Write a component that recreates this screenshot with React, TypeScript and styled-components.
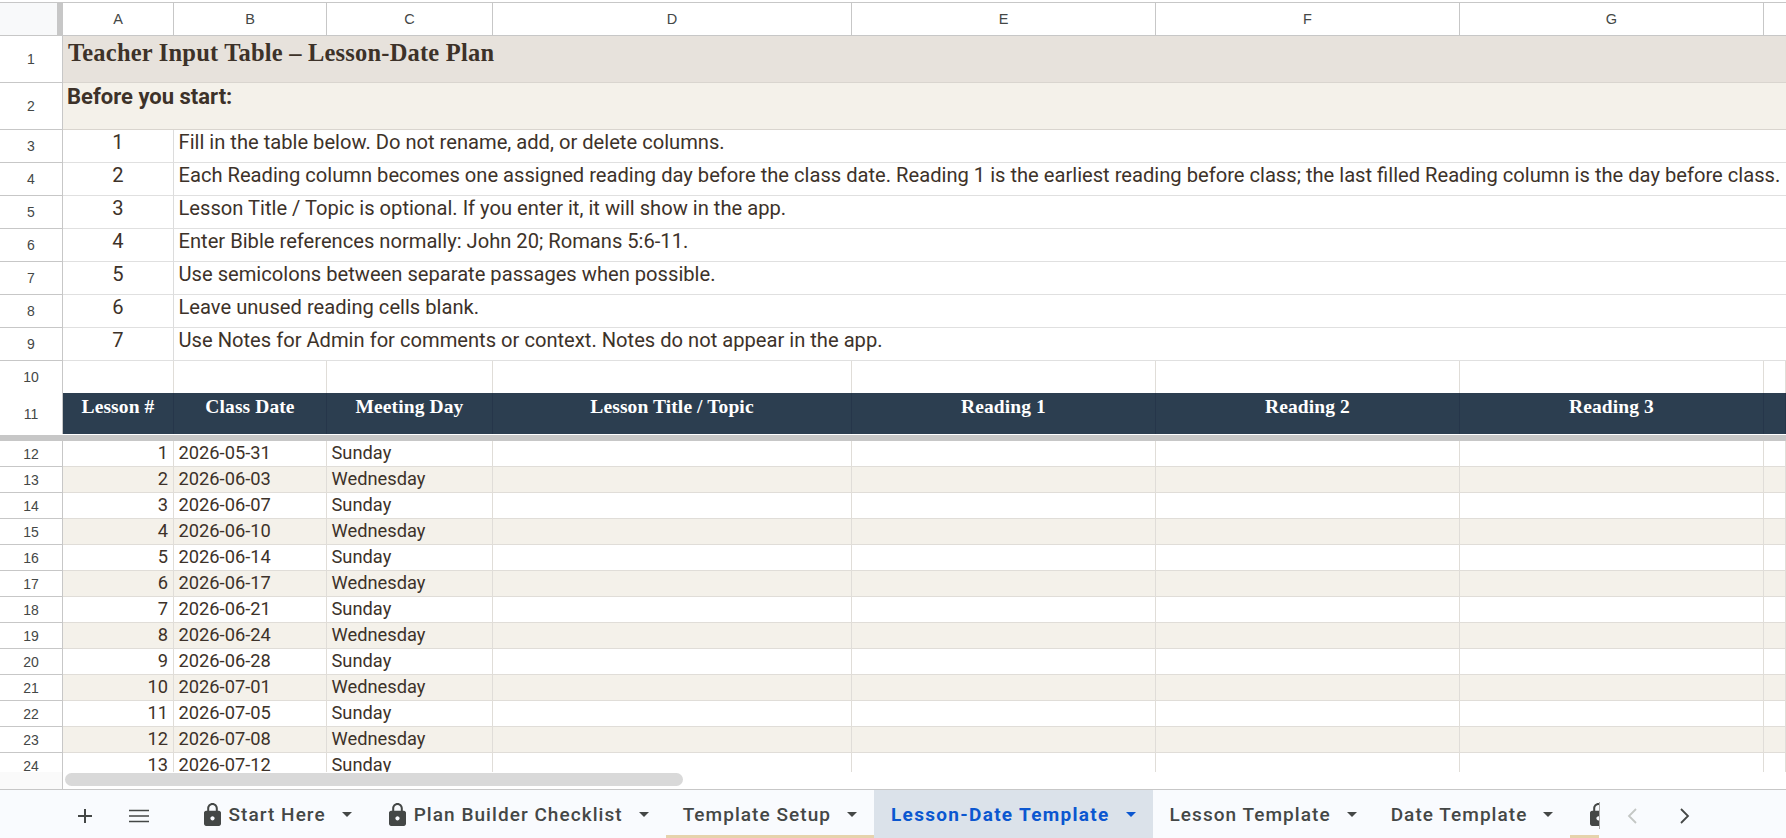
import * as React from "react";
import styled, { createGlobalStyle, css } from "styled-components";

const COLUMNS = "63px 111px 153px 166px 359px 304px 304px 304px 1fr";

const instructions = [
  "Fill in the table below. Do not rename, add, or delete columns.",
  "Each Reading column becomes one assigned reading day before the class date. Reading 1 is the earliest reading before class; the last filled Reading column is the day before class.",
  "Lesson Title / Topic is optional. If you enter it, it will show in the app.",
  "Enter Bible references normally: John 20; Romans 5:6-11.",
  "Use semicolons between separate passages when possible.",
  "Leave unused reading cells blank.",
  "Use Notes for Admin for comments or context. Notes do not appear in the app.",
];

const headers = ["Lesson #", "Class Date", "Meeting Day", "Lesson Title / Topic", "Reading 1", "Reading 2", "Reading 3"];

const dates = [
  "2026-05-31",
  "2026-06-03",
  "2026-06-07",
  "2026-06-10",
  "2026-06-14",
  "2026-06-17",
  "2026-06-21",
  "2026-06-24",
  "2026-06-28",
  "2026-07-01",
  "2026-07-05",
  "2026-07-08",
  "2026-07-12",
];

// the last tab is scrolled out of the strip, only its lock shows
const tabs = [
  { name: "Start Here", locked: true },
  { name: "Plan Builder Checklist", locked: true },
  { name: "Template Setup", underlined: true },
  { name: "Lesson-Date Template", active: true },
  { name: "Lesson Template" },
  { name: "Date Template" },
  { name: "", locked: true, underlined: true },
];

function LockIcon() {
  return (
    <LockSvg viewBox="4 1 16 21" preserveAspectRatio="none">
      <path d="M18 8h-1V6c0-2.76-2.24-5-5-5S7 3.24 7 6v2H6c-1.1 0-2 .9-2 2v10c0 1.1.9 2 2 2h12c1.1 0 2-.9 2-2V10c0-1.1-.9-2-2-2zm-6 9c-1.1 0-2-.9-2-2s.9-2 2-2 2 .9 2 2-.9 2-2 2zm3.1-9H8.9V6c0-1.71 1.39-3.1 3.1-3.1 1.71 0 3.1 1.39 3.1 3.1v2z" />
    </LockSvg>
  );
}

export default function App() {
  return (
    <Page>
      <GlobalStyle />
      <Sheet>
        <ColumnHeaderRow>
          <Corner />
          {["A", "B", "C", "D", "E", "F", "G", ""].map((letter, i) => (
            <ColumnLetter key={i}>{letter}</ColumnLetter>
          ))}
        </ColumnHeaderRow>

        <BannerRow $tone="#e7e2dc">
          <RowLabel>1</RowLabel>
          <Title>Teacher Input Table – Lesson-Date Plan</Title>
        </BannerRow>
        <BannerRow $tone="#f4f1ea">
          <RowLabel>2</RowLabel>
          <Subtitle>Before you start:</Subtitle>
        </BannerRow>

        {instructions.map((text, i) => (
          <InstructionRow key={i}>
            <RowLabel>{i + 3}</RowLabel>
            <StepNumber>{i + 1}</StepNumber>
            <StepText>{text}</StepText>
          </InstructionRow>
        ))}

        <InstructionRow>
          <RowLabel>10</RowLabel>
          {Array.from({ length: 8 }).map((_, i) => (
            <Cell key={i} />
          ))}
        </InstructionRow>

        <HeaderRow>
          <RowLabel>11</RowLabel>
          {headers.map((h) => (
            <HeaderCell key={h}>{h}</HeaderCell>
          ))}
          <HeaderCell />
        </HeaderRow>
        <FreezeBar />

        {dates.map((date, i) => (
          <DataRow key={date} $striped={i % 2 === 1}>
            <RowLabel>{i + 12}</RowLabel>
            <Cell $align="right">{i + 1}</Cell>
            <Cell>{date}</Cell>
            <Cell>{i % 2 === 0 ? "Sunday" : "Wednesday"}</Cell>
            {Array.from({ length: 5 }).map((_, j) => (
              <Cell key={j} />
            ))}
          </DataRow>
        ))}
      </Sheet>

      <ScrollArea>
        <ScrollGutter />
        <ScrollThumb />
      </ScrollArea>

      <Toolbar>
        <ToolButton $width={43} $first>
          <svg width="14" height="14" viewBox="0 0 14 14" fill="none" stroke="#444746" strokeWidth="2">
            <path d="M7 0v14M0 7h14" />
          </svg>
        </ToolButton>
        <ToolButton $width={66}>
          <svg width="20" height="14" viewBox="0 0 20 14" fill="none" stroke="#444746" strokeWidth="1.6">
            <path d="M0 1.5h20M0 7h20M0 12.5h20" />
          </svg>
        </ToolButton>
        <TabStrip>
          {tabs.map((tab, i) => (
            <Tab key={i} $active={tab.active} $underlined={tab.underlined} $locked={tab.locked}>
              {tab.locked && <LockIcon />}
              {tab.name}
              <Caret $active={tab.active} />
            </Tab>
          ))}
        </TabStrip>
        <TabNav>
          <svg width="12" height="18" viewBox="0 0 12 18" fill="none" stroke="#c4c7c5" strokeWidth="1.8">
            <path d="M10 2 3 9l7 7" />
          </svg>
          <svg width="12" height="18" viewBox="0 0 12 18" fill="none" stroke="#444746" strokeWidth="1.8">
            <path d="m2 2 7 7-7 7" />
          </svg>
        </TabNav>
      </Toolbar>
    </Page>
  );
}

const GlobalStyle = createGlobalStyle`
  html, body {
    margin: 0;
    height: 100%;
    overflow: hidden;
    background: white;
  }
  #root {
    height: 100%;
  }
`;

const Page = styled.div`
  display: flex;
  flex-direction: column;
  height: 838px;
  font-family: Roboto, "Liberation Sans", sans-serif;
  color: #3d3229;
  background: white;
`;

const Sheet = styled.div`
  height: 772px;
  padding-top: 2px;
  box-sizing: border-box;
  overflow: hidden;
  flex-shrink: 0;
`;

const gridRow = css`
  display: grid;
  grid-template-columns: ${COLUMNS};
`;

const ColumnHeaderRow = styled.div`
  ${gridRow};
  height: 34px;
  box-sizing: border-box;
  border-top: 1px solid #c7c7c7;
  border-bottom: 1px solid #c7c7c7;
`;

const Corner = styled.div`
  background: #f8f9fa;
  border-right: 6px solid #c7c7c7;
`;

const ColumnLetter = styled.div`
  display: flex;
  align-items: center;
  justify-content: center;
  border-right: 1px solid #c7c7c7;
  font-family: "Liberation Sans", sans-serif;
  font-size: 14.5px;
  color: #444746;
  &:last-child {
    border-right: none;
  }
`;

const RowLabel = styled.div`
  display: flex;
  align-items: center;
  justify-content: center;
  background: white;
  border-right: 1px solid #c7c7c7;
  border-bottom: 1px solid #c7c7c7;
  font-family: "Liberation Sans", sans-serif;
  font-size: 14px;
  color: #444746;
  box-sizing: border-box;
`;

const BannerRow = styled.div<{ $tone: string }>`
  display: grid;
  grid-template-columns: 63px 1fr;
  height: 47px;
  background: ${(p) => p.$tone};
`;

const bannerText = css`
  border-bottom: 1px solid #d9d5cf;
  white-space: nowrap;
`;

const Title = styled.div`
  ${bannerText};
  padding-left: 5px;
  font-family: "Liberation Serif", serif;
  font-weight: 700;
  font-size: 24.5px;
  letter-spacing: 0.2px;
  line-height: 34px;
`;

const Subtitle = styled.div`
  ${bannerText};
  padding-left: 4px;
  font-weight: 700;
  font-size: 22px;
  line-height: 28px;
`;

const InstructionRow = styled.div`
  ${gridRow};
  height: 33px;
`;

const StepNumber = styled.div`
  text-align: center;
  font-size: 20.15px;
  line-height: 25px;
  border-right: 1px solid #dcdcdc;
  border-bottom: 1px solid #e0e0e0;
`;

const StepText = styled.div`
  grid-column: 3 / -1;
  padding-left: 4.5px;
  font-size: 20.15px;
  line-height: 25px;
  white-space: nowrap;
  overflow: hidden;
  border-bottom: 1px solid #e0e0e0;
`;

const HeaderRow = styled.div`
  ${gridRow};
  height: 41px;
  margin-top: -1px;
  & > ${RowLabel} {
    border-bottom: none;
  }
`;

const HeaderCell = styled.div`
  background: #2c3e50;
  color: white;
  text-align: center;
  font-family: "Liberation Serif", serif;
  font-weight: 700;
  font-size: 19.5px;
  letter-spacing: 0.1px;
  line-height: 28px;
  border-right: 1px solid #26364a;
`;

const FreezeBar = styled.div`
  height: 6px;
  margin-top: 1px;
  background: #c7c7c7;
`;

const DataRow = styled.div<{ $striped: boolean }>`
  ${gridRow};
  height: 26px;
  background: ${(p) => (p.$striped ? "#f4f1ea" : "white")};
`;

const Cell = styled.div<{ $align?: string }>`
  padding: 0 5px 0 4.5px;
  font-size: 18.3px;
  line-height: 24px;
  text-align: ${(p) => p.$align ?? "left"};
  border-right: 1px solid #e0ddd8;
  border-bottom: 1px solid #e0ddd8;
  white-space: nowrap;
  overflow: hidden;
`;

const ScrollArea = styled.div`
  display: flex;
  height: 17px;
  flex-shrink: 0;
`;

const ScrollGutter = styled.div`
  width: 62px;
  background: #fafafa;
  border-right: 1px solid #c7c7c7;
`;

const ScrollThumb = styled.div`
  width: 618px;
  height: 13px;
  margin: 1px 0 0 2px;
  border-radius: 7px;
  background: #d9d9d9;
`;

const Toolbar = styled.div`
  display: flex;
  height: 49px;
  box-sizing: border-box;
  border-top: 1px solid #c7c7c7;
  background: #f9fbfe;
`;

const ToolButton = styled.div<{ $width: number; $first?: boolean }>`
  display: flex;
  align-items: center;
  justify-content: center;
  width: ${(p) => p.$width}px;
  margin-left: ${(p) => (p.$first ? "63px" : "0")};
  margin-right: ${(p) => (p.$first ? "0" : "11.5px")};
  padding-top: 3px;
  box-sizing: border-box;
  height: 100%;
`;

const TabStrip = styled.div`
  display: flex;
  width: 1415px;
  flex-shrink: 0;
  overflow: hidden;
`;

const Tab = styled.div<{ $active?: boolean; $underlined?: boolean; $locked?: boolean }>`
  display: flex;
  align-items: center;
  flex-shrink: 0;
  height: 100%;
  box-sizing: border-box;
  padding: 6px 17px 3px ${(p) => (p.$locked ? "20px" : "17px")};
  font-size: 19px;
  font-weight: ${(p) => (p.$active ? 700 : 500)};
  letter-spacing: ${(p) => (p.$active ? "1.3px" : "1.05px")};
  white-space: nowrap;
  color: ${(p) => (p.$active ? "#0b57d0" : "#444746")};
  background: ${(p) => (p.$active ? "#dbe2ea" : "transparent")};
  border-bottom: 3px solid ${(p) => (p.$underlined ? "#e6d3ac" : "transparent")};
`;

const LockSvg = styled.svg`
  width: 17px;
  height: 23px;
  margin-right: 8px;
  fill: #444746;
  flex-shrink: 0;
`;

const Caret = styled.span<{ $active?: boolean }>`
  width: 0;
  height: 0;
  margin-left: 16px;
  border-left: 5px solid transparent;
  border-right: 5px solid transparent;
  border-top: 5px solid ${(p) => (p.$active ? "#0b57d0" : "#444746")};
`;

const TabNav = styled.div`
  display: flex;
  align-items: center;
  gap: 41px;
  height: 27px;
  margin-top: 12px;
  padding-left: 26px;
  border-left: 1px solid #a8a8a8;
`;
